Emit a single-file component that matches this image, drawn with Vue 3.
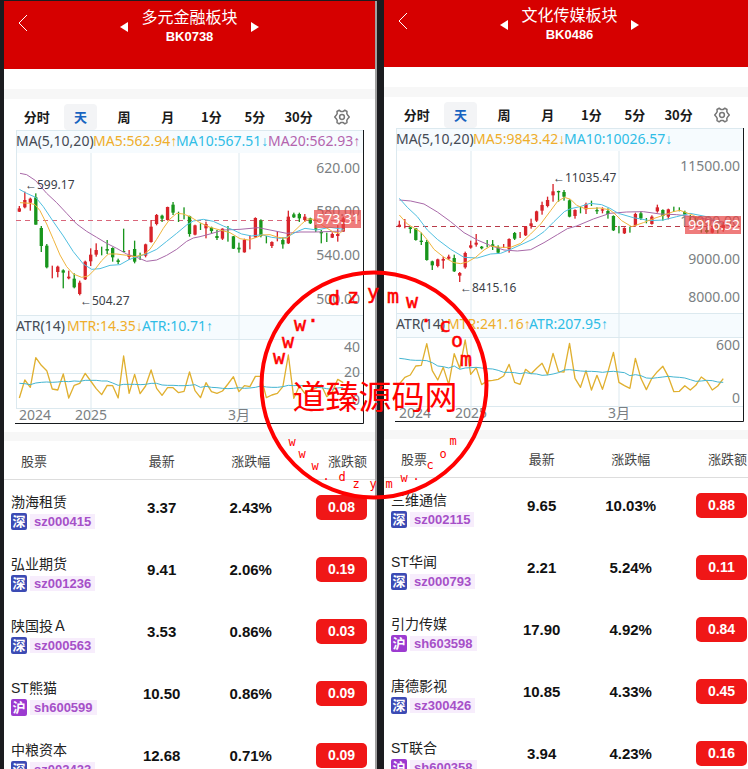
<template>
  <main class="board-page">
    <section v-for="board in boards" :key="board.code" class="phone">
      <header class="top-bar">
        <button class="back-btn" type="button" aria-label="返回">
          <svg width="10" height="18" viewBox="0 0 10 18"><path d="M9 1 1 9l8 8" /></svg>
        </button>
        <div class="board-switch">
          <button class="arrow-btn" type="button" aria-label="上一个板块">
            <svg width="8" height="10" viewBox="0 0 8 10"><path d="M8 0v10L0 5z" /></svg>
          </button>
          <div class="board-name">
            <h1>{{ board.name }}</h1>
            <p>{{ board.code }}</p>
          </div>
          <button class="arrow-btn" type="button" aria-label="下一个板块">
            <svg width="8" height="10" viewBox="0 0 8 10"><path d="M0 0v10l8-5z" /></svg>
          </button>
        </div>
      </header>

      <div class="spacer"></div>

      <section class="chart-card">
        <nav class="period-tabs">
          <button
            v-for="period in periods"
            :key="period"
            type="button"
            :class="['period-tab', { active: board.period === period }]"
            @click="board.period = period"
          >
            <span>{{ period }}</span>
          </button>
          <button class="period-tab" type="button" aria-label="设置">
            <svg class="gear" width="16" height="16" viewBox="0 0 16 16">
              <path d="M5.2 1.2 6.7 2.4H9.3L10.8 1.2 13 2.5 12.8 4.6 14 6.6 15.3 8 14 9.4 12.8 11.4 13 13.5 10.8 14.8 9.3 13.6H6.7L5.2 14.8 3 13.5 3.2 11.4 2 9.4.7 8 2 6.6 3.2 4.6 3 2.5z" />
              <circle cx="8" cy="8" r="2.4" />
            </svg>
          </button>
        </nav>

        <svg class="chart" viewBox="0 0 349 294" role="img" :aria-label="board.name">
          <rect class="band" x="1" y="0" width="347" height="23" />
          <rect class="band" x="1" y="185" width="347" height="24" />
          <path class="grid" d="M1.5 0V278M76 23V290M224 23V290M1 .5H348M1 185.5H348M1 209.5H348M1 278.5H348" />
          <path v-if="board.midGrid" class="grid" d="M1 243.5H348" />

          <text v-for="item in board.axis" :key="item.y" class="axis" x="345" :y="item.y" text-anchor="end">{{ item.text }}</text>
          <text class="axis" x="4" y="290">2024</text>
          <text class="axis" x="76" y="290" text-anchor="middle">2025</text>
          <text class="axis" x="224" y="290" text-anchor="middle">3月</text>

          <path class="dash" :class="board.dashClass" :d="`M1 ${board.dashY}H345`" />

          <!-- plot data is kept at three units per pixel -->
          <g :transform="`translate(${board.plotX} ${board.plotY}) scale(0.33333)`">
            <g v-for="(c, i) in board.candles" :key="i" :class="c[0] === 'r' ? 'up' : 'down'">
              <rect :x="candleX(board, i) - 2" :y="c[1]" width="4" :height="c[2] - c[1]" />
              <rect v-if="c.length > 3" :x="candleX(board, i) - 5" :y="c[3]" width="10" :height="c[4] - c[3]" />
            </g>
            <polyline class="line purple" :points="board.ma20" />
            <polyline class="line blue" :points="board.ma10" />
            <polyline class="line yellow" :points="board.ma5" />
            <g transform="translate(0 450)">
              <polyline class="line gold" :points="series(board, board.mtr)" />
              <polyline class="line teal" :points="series(board, board.atr)" />
            </g>
          </g>

          <rect class="price-tag" :x="346 - board.tagWidth" :y="board.tagY" :width="board.tagWidth" height="18" />
          <text class="price" x="345" :y="board.tagY + 14" text-anchor="end">{{ board.price }}</text>

          <text v-for="note in board.notes" :key="note.text" class="note" :x="note.x" :y="note.y"><tspan class="arrow">←</tspan>{{ note.text }}</text>
          <text v-for="item in board.legend" :key="item.text" :class="['legend', item.color]" :x="item.x" :y="item.y">{{ item.text }}<tspan class="arrow">{{ item.arrow }}</tspan></text>

          <path class="frame" d="M348.5 0V293.5H0" />
        </svg>
      </section>

      <table class="stock-table">
        <colgroup>
          <col class="col-name" />
          <col class="col-price" />
          <col class="col-rate" />
          <col class="col-change" />
        </colgroup>
        <thead>
          <tr>
            <th class="name-head">股票</th>
            <th>最新</th>
            <th>涨跌幅</th>
            <th class="change-head">涨跌额</th>
          </tr>
        </thead>
        <tbody>
          <tr v-for="stock in board.stocks" :key="stock.code">
            <td class="name-cell">
              <div class="stock-name">{{ stock.name }}</div>
              <div class="stock-code">
                <span :class="['market', stock.code.slice(0, 2)]">{{ stock.code.startsWith('sz') ? '深' : '沪' }}</span>
                <span class="code">{{ stock.code }}</span>
              </div>
            </td>
            <td class="number">{{ stock.price }}</td>
            <td class="number">{{ stock.rate }}</td>
            <td class="change-cell"><span class="change">{{ stock.change }}</span></td>
          </tr>
        </tbody>
      </table>
    </section>

    <svg class="stamp" width="230" height="230" viewBox="0 0 230 230">
      <circle cx="115" cy="115" r="112.5" />
      <text v-for="(l, i) in stampTop" :key="'t' + i" class="stamp-big" :x="l[1]" :y="l[2]">{{ l[0] }}</text>
      <text class="stamp-name" x="116" y="139">道臻源码网</text>
      <text v-for="(l, i) in stampBottom" :key="'b' + i" class="stamp-small" :x="l[1]" :y="l[2]">{{ l[0] }}</text>
    </svg>
  </main>
</template>

<script setup>
import { reactive } from 'vue';

const periods = ['分时', '天', '周', '月', '1分', '5分', '30分'];

const candleX = (board, i) => board.startX + i * 16.47;

const series = (board, values) =>
  values.map((v, i) => `${candleX(board, i).toFixed(1)},${v}`).join(' ');

// candle: [r = up / g = down, high, low, body top, body bottom]
const boards = reactive([
  {
    name: '多元金融板块',
    code: 'BK0738',
    period: '天',
    plotX: -15,
    plotY: 20,
    startX: 58,
    midGrid: true,
    dashY: 90.5,
    dashClass: 'soft',
    price: '573.31',
    tagWidth: 47,
    tagY: 80,
    axis: [
      { text: '620.00', y: 43 },
      { text: '580.00', y: 86 },
      { text: '540.00', y: 130 },
      { text: '500.00', y: 174 },
      { text: '40', y: 222 },
      { text: '20', y: 247 },
      { text: '0', y: 275 },
    ],
    notes: [
      { text: '599.17', x: 10, y: 59 },
      { text: '504.27', x: 65, y: 175 },
    ],
    legend: [
      { text: 'MA(5,10,20)', x: 1, y: 16, color: 'c-dark', arrow: '' },
      { text: 'MA5:562.94', x: 78, y: 16, color: 'c-yellow', arrow: '↑' },
      { text: 'MA10:567.51', x: 161, y: 16, color: 'c-blue', arrow: '↓' },
      { text: 'MA20:562.93', x: 253, y: 16, color: 'c-purple', arrow: '↑' },
      { text: 'ATR(14)', x: 1, y: 201, color: 'c-dark', arrow: '' },
      { text: 'MTR:14.35', x: 52, y: 201, color: 'c-yellow', arrow: '↓' },
      { text: 'ATR:10.71', x: 127, y: 201, color: 'c-blue', arrow: '↑' },
    ],
    candles: [
      ['r', 168, 186, 175, 185], ['r', 125, 175, 150, 172], ['r', 143, 182, 146, 158],
      ['g', 130, 224, 142, 224], ['g', 228, 306, 234, 288], ['g', 282, 355, 287, 352],
      ['r', 347, 385], ['r', 347, 382, 350, 366], ['g', 358, 415, 361, 368],
      ['r', 362, 388, 380, 385], ['g', 370, 415, 386, 412], ['r', 392, 436, 398, 432],
      ['r', 332, 390, 335, 388], ['r', 295, 348, 314, 334], ['r', 280, 320, 300, 314],
      ['g', 290, 316], ['g', 270, 312, 297, 302], ['g', 292, 335, 294, 322],
      ['g', 326, 342, 331, 336], ['g', 236, 306, 303, 306], ['r', 300, 330, 315, 321],
      ['g', 272, 340, 297, 335], ['g', 308, 330], ['r', 281, 322, 283, 317],
      ['r', 210, 278, 230, 276], ['r', 192, 226, 195, 222], ['g', 194, 216, 197, 206],
      ['r', 170, 212, 171, 210], ['g', 156, 195, 164, 188], ['g', 185, 216],
      ['g', 172, 208], ['g', 197, 260, 198, 252], ['r', 224, 256, 226, 254],
      ['g', 220, 240], ['r', 215, 265, 222, 235], ['g', 230, 250, 233, 243],
      ['g', 240, 270, 258, 264], ['r', 235, 270, 236, 266], ['g', 228, 275],
      ['g', 258, 297, 259, 296], ['g', 278, 308, 293, 298], ['r', 266, 308, 270, 307],
      ['r', 256, 298], ['r', 202, 264, 204, 262], ['g', 208, 262, 212, 258],
      ['g', 258, 280], ['r', 274, 294, 276, 288], ['r', 244, 274],
      ['g', 262, 296, 270, 283], ['r', 182, 282, 200, 280], ['g', 188, 204, 193, 202],
      ['g', 188, 216, 192, 205], ['r', 192, 216, 200, 210], ['g', 203, 222, 205, 220],
      ['g', 225, 246, 235, 239], ['g', 240, 280, 246, 250], ['g', 248, 276],
      ['r', 247, 264, 252, 263], ['r', 225, 275, 252, 258], ['r', 200, 246, 205, 245],
    ],
    ma5: '60,158 90,160 105,164 120,182 140,222 160,268 180,315 200,350 220,372 245,382 265,378 285,358 305,332 325,312 350,312 380,316 405,320 430,314 450,298 470,268 490,235 510,207 530,190 550,192 570,200 600,218 630,232 660,240 690,248 720,266 745,270 770,262 785,255 810,254 835,262 860,265 880,246 905,222 922,207 945,208 970,228 1000,246 1020,250 1032,238',
    ma10: '58,118 80,130 107,142 130,170 160,215 190,258 220,305 250,342 275,358 300,356 330,346 360,344 385,330 405,322 440,312 470,298 500,274 530,250 560,225 580,213 610,208 640,214 670,228 700,240 725,252 755,258 785,254 815,262 840,265 860,262 890,245 915,235 950,240 990,232 1032,238',
    ma20: '60,70 80,74 107,92 140,130 170,158 200,190 230,222 260,244 290,262 320,280 350,295 380,312 410,322 440,334 470,330 500,316 530,298 560,274 580,264 600,260 630,252 670,240 720,238 775,233 810,240 860,250 900,246 950,246 1032,243',
    mtr: [294, 240, 262, 173, 196, 212, 267, 270, 222, 294, 256, 250, 220, 243, 266, 284, 256, 257, 294, 168, 280, 223, 281, 258, 210, 265, 286, 263, 263, 278, 274, 216, 272, 293, 248, 275, 280, 273, 252, 230, 275, 257, 260, 229, 229, 293, 285, 280, 260, 165, 295, 258, 280, 270, 265, 255, 290, 275, 238, 248],
    atr: [250, 251, 254, 249, 247, 246, 247, 246, 244, 245, 243, 244, 241, 241, 241, 243, 243, 249, 256, 253, 253, 253, 254, 253, 250, 250, 255, 256, 256, 257, 257, 256, 254, 262, 259, 262, 263, 265, 266, 265, 263, 265, 264, 262, 258, 261, 262, 262, 260, 256, 257, 256, 258, 260, 262, 263, 266, 268, 264, 262],
    stocks: [
      { name: '渤海租赁', code: 'sz000415', price: '3.37', rate: '2.43%', change: '0.08' },
      { name: '弘业期货', code: 'sz001236', price: '9.41', rate: '2.06%', change: '0.19' },
      { name: '陕国投Ａ', code: 'sz000563', price: '3.53', rate: '0.86%', change: '0.03' },
      { name: 'ST熊猫', code: 'sh600599', price: '10.50', rate: '0.86%', change: '0.09' },
      { name: '中粮资本', code: 'sz002423', price: '12.68', rate: '0.71%', change: '0.09' },
    ],
  },
  {
    name: '文化传媒板块',
    code: 'BK0486',
    period: '天',
    plotX: -11,
    plotY: 22,
    startX: 46,
    midGrid: false,
    dashY: 98.5,
    dashClass: 'strong',
    price: '9916.52',
    tagWidth: 56,
    tagY: 88,
    axis: [
      { text: '11500.00', y: 43 },
      { text: '10000.00', y: 98 },
      { text: '9000.00', y: 136 },
      { text: '8000.00', y: 174 },
      { text: '600', y: 222 },
      { text: '0', y: 275 },
    ],
    notes: [
      { text: '11035.47', x: 158, y: 54 },
      { text: '8415.16', x: 65, y: 164 },
    ],
    legend: [
      { text: 'MA(5,10,20)', x: 1, y: 16, color: 'c-dark', arrow: '' },
      { text: 'MA5:9843.42', x: 78, y: 16, color: 'c-yellow', arrow: '↓' },
      { text: 'MA10:10026.57', x: 169, y: 16, color: 'c-blue', arrow: '↓' },
      { text: 'ATR(14)', x: 1, y: 201, color: 'c-dark', arrow: '' },
      { text: 'MTR:241.16', x: 52, y: 201, color: 'c-yellow', arrow: '↑' },
      { text: 'ATR:207.95', x: 134, y: 201, color: 'c-blue', arrow: '↑' },
    ],
    candles: [
      ['r', 212, 232, 224, 230], ['r', 207, 235], ['g', 230, 250, 232, 237],
      ['g', 234, 272, 235, 270], ['g', 248, 285, 272, 276], ['g', 270, 332, 276, 330],
      ['g', 332, 360, 334, 346], ['r', 326, 352, 328, 348], ['r', 320, 356, 327, 332],
      ['r', 314, 330, 320, 326], ['g', 314, 366, 324, 364], ['r', 366, 396, 369, 377],
      ['r', 305, 356, 309, 352], ['r', 272, 296, 286, 293], ['r', 252, 290, 278, 284],
      ['g', 288, 298, 290, 295], ['g', 270, 292], ['g', 270, 300, 283, 290],
      ['g', 286, 312, 292, 308], ['r', 282, 294], ['r', 265, 308, 267, 298],
      ['g', 246, 270, 249, 266], ['r', 246, 264], ['r', 228, 258, 230, 256],
      ['r', 206, 236, 220, 228], ['r', 182, 216, 184, 212], ['r', 155, 194, 165, 182],
      ['r', 140, 172, 150, 168], ['r', 102, 155, 124, 136], ['g', 122, 155, 123, 127],
      ['g', 120, 152, 126, 140], ['g', 148, 202, 151, 200], ['r', 178, 206, 180, 198],
      ['g', 170, 190], ['r', 158, 192, 163, 178], ['g', 152, 168],
      ['g', 172, 192, 180, 184], ['r', 172, 190, 178, 182], ['g', 175, 206, 183, 192],
      ['g', 196, 243, 198, 241], ['g', 228, 250], ['r', 232, 252, 234, 250],
      ['g', 230, 248], ['r', 188, 230, 192, 226], ['g', 184, 210, 190, 205],
      ['g', 204, 220], ['r', 196, 224, 200, 222], ['r', 164, 188, 172, 184],
      ['g', 178, 212, 180, 198], ['r', 176, 208, 178, 200], ['g', 170, 186],
      ['g', 172, 184], ['g', 182, 196, 186, 194], ['g', 195, 215],
      ['g', 200, 220], ['g', 220, 248], ['g', 232, 250, 240, 246],
      ['r', 230, 250, 235, 248], ['g', 225, 250], ['r', 215, 245, 225, 240],
    ],
    ma5: '46,195 70,222 110,246 130,270 150,298 180,322 210,338 230,341 250,336 275,322 300,300 320,288 350,292 380,292 410,280 440,252 470,222 500,182 520,155 541,142 560,148 578,166 603,176 648,174 678,180 693,192 713,212 743,230 778,218 808,206 838,196 868,185 888,181 928,196 968,220 1018,240',
    ma10: '46,145 70,172 100,200 130,240 160,268 200,298 240,322 280,324 320,312 350,310 380,298 420,280 450,266 480,245 510,215 541,185 560,176 588,170 618,160 653,164 678,175 703,190 748,203 798,212 838,210 878,200 918,190 968,200 1018,222',
    ma20: '46,150 80,153 120,162 160,186 200,215 240,248 280,270 320,287 360,300 400,303 440,299 480,278 520,254 550,236 578,228 628,207 678,190 728,186 778,185 828,192 878,194 928,200 978,210 1018,216',
    mtr: [252, 232, 225, 198, 196, 131, 212, 240, 202, 254, 161, 205, 120, 223, 203, 254, 243, 241, 238, 228, 193, 247, 253, 208, 221, 205, 190, 224, 160, 215, 216, 130, 235, 262, 212, 270, 226, 268, 215, 157, 247, 257, 265, 175, 235, 269, 235, 215, 199, 230, 275, 274, 257, 270, 256, 231, 243, 270, 258, 236],
    atr: [175, 177, 180, 181, 181, 182, 188, 198, 200, 204, 198, 208, 204, 203, 202, 204, 206, 207, 211, 217, 217, 218, 221, 218, 221, 222, 226, 225, 222, 218, 210, 209, 211, 213, 214, 214, 215, 217, 215, 214, 216, 218, 227, 224, 227, 234, 235, 233, 231, 229, 231, 232, 234, 239, 244, 243, 241, 242, 246, 247],
    stocks: [
      { name: '三维通信', code: 'sz002115', price: '9.65', rate: '10.03%', change: '0.88' },
      { name: 'ST华闻', code: 'sz000793', price: '2.21', rate: '5.24%', change: '0.11' },
      { name: '引力传媒', code: 'sh603598', price: '17.90', rate: '4.92%', change: '0.84' },
      { name: '唐德影视', code: 'sz300426', price: '10.85', rate: '4.33%', change: '0.45' },
      { name: 'ST联合', code: 'sh600358', price: '3.94', rate: '4.23%', change: '0.16' },
    ],
  },
]);

// letters around the round stamp: [char, x, baseline]
const stampTop = [
  ['w', 20, 94], ['w', 29, 78], ['w', 41, 61], ['.', 54, 52], ['d', 75, 35],
  ['z', 94, 33], ['y', 114, 29], ['m', 134, 33], ['w', 153, 38], ['.', 167, 52],
  ['c', 186, 62], ['o', 198, 77], ['m', 207, 96],
];
const stampBottom = [
  ['w', 33, 176], ['w', 43, 188], ['w', 56, 200], ['.', 67, 210], ['d', 83, 211],
  ['z', 97, 218], ['y', 114, 218], ['m', 130, 218], ['w', 145, 212], ['.', 157, 210],
  ['c', 171, 199], ['o', 184, 188], ['m', 194, 175],
];
</script>

<style>
body {
  background-color: #1b1c1f;
}
</style>

<style scoped>
.board-page {
  position: relative;
  display: flex;
  gap: 7px;
  height: 100vh;
  padding: 1px 0 0 4px;
  box-sizing: border-box;
  overflow: hidden;
  background-color: #1b1c1f;
  font-family: 'Liberation Sans', 'Noto Sans CJK SC', sans-serif;
}

.phone {
  flex: 0 0 calc(50% - 1px);
  background-color: #ffffff;
}

.phone:first-child {
  box-sizing: content-box;
  border-right: 2px solid #a0a0a0;
}

/* second screen is scrolled slightly further */
.phone + .phone {
  margin-top: -2px;
}

button {
  border: none;
  background: none;
  padding: 0;
  cursor: pointer;
}

.top-bar {
  position: relative;
  height: 68px;
  background-color: #d60000;
  color: #ffffff;
}

.back-btn {
  position: absolute;
  left: 14px;
  top: 13px;
}

.back-btn svg {
  display: block;
  fill: none;
  stroke: #ffffff;
}

.board-switch {
  display: flex;
  justify-content: center;
  align-items: center;
  gap: 13px;
  padding-top: 7px;
}

.arrow-btn svg {
  display: block;
  fill: #ffffff;
}

.board-name {
  text-align: center;
}

.board-name h1 {
  margin: 0;
  font-size: 16px;
  line-height: 20px;
  font-weight: 400;
}

.board-name p {
  margin: 0;
  font-size: 13px;
  line-height: 18px;
  font-weight: 700;
}

.spacer {
  height: 20px;
}

.chart-card {
  border-top: 10px solid #f7f7f7;
  border-bottom: 9px solid #f7f7f7;
  padding: 5px 11px 8px;
}

.period-tabs {
  display: flex;
}

.period-tab {
  flex: 1;
  display: flex;
  justify-content: center;
  align-items: center;
  height: 26px;
  font-family: 'Noto Sans CJK SC', sans-serif;
  font-size: 13px;
  font-weight: 700;
  color: #1a1a1a;
}

.period-tab span {
  min-width: 33px;
  line-height: 26px;
  border-radius: 4px;
}

.period-tab.active span {
  background-color: #f3f4f6;
  color: #1763c0;
}

.gear {
  fill: none;
  stroke: #777777;
  stroke-width: 1.5;
  stroke-linejoin: round;
}

.chart {
  display: block;
  width: 100%;
  font-family: 'Noto Sans', 'Noto Sans CJK SC', sans-serif;
  font-size: 14px;
}

.band {
  fill: #f6fbfe;
}

.grid {
  fill: none;
  stroke: #dce9ef;
}

.frame {
  fill: none;
  stroke: #16191c;
}

.axis {
  fill: #7b7f83;
}

.dash {
  fill: none;
  stroke-dasharray: 5 4;
}

.dash.soft {
  stroke: #d9667a;
}

.dash.strong {
  stroke: #b83a48;
}

.up {
  fill: #d8232a;
}

.down {
  fill: #18951c;
}

.line {
  fill: none;
  stroke-width: 3;
  stroke-linejoin: round;
}

.purple {
  stroke: #a868a8;
}

.blue {
  stroke: #4fbfe0;
}

.yellow {
  stroke: #efb43c;
}

.gold {
  stroke: #e0b030;
  stroke-width: 4;
}

.teal {
  stroke: #42b4d0;
}

.price-tag {
  fill: #e84545;
  fill-opacity: 0.7;
}

.price {
  fill: #ffffff;
}

.note {
  font-size: 12px;
  fill: #3a4048;
}

.arrow {
  font-family: 'Liberation Sans', sans-serif;
}

.c-dark {
  fill: #444a54;
}

.c-yellow {
  fill: #efae2c;
}

.c-blue {
  fill: #2fbde6;
}

.c-purple {
  fill: #b464ae;
}

.stock-table {
  width: 100%;
  table-layout: fixed;
  border-collapse: collapse;
}

.col-name {
  width: 31%;
}

.col-price {
  width: 23%;
}

.col-rate {
  width: 25%;
}

.col-change {
  width: 21%;
}

.stock-table th {
  height: 38px;
  padding: 0;
  border-bottom: 1px solid #dddddd;
  font-family: 'Noto Sans CJK SC', sans-serif;
  font-size: 13px;
  font-weight: 400;
  color: #444444;
}

.stock-table .name-head {
  padding-left: 17px;
  text-align: left;
}

.stock-table .change-head {
  padding-right: 8px;
  text-align: right;
}

.stock-table td {
  height: 62px;
  padding: 0;
  box-sizing: border-box;
  vertical-align: top;
}

.stock-table .name-cell {
  padding: 12px 0 0 7px;
}

.stock-name {
  font-size: 14px;
  line-height: 20px;
  color: #222222;
}

.stock-code {
  display: flex;
  align-items: center;
  gap: 3px;
  margin-top: 1px;
}

.market {
  width: 16px;
  border-radius: 2px;
  font-size: 13px;
  line-height: 17px;
  font-weight: 700;
  text-align: center;
  color: #ffffff;
}

.market.sz {
  background-color: #3c4bb4;
}

.market.sh {
  background-color: #9c3bd0;
}

.code {
  padding: 0 4px;
  background-color: #f7edfc;
  font-size: 13px;
  line-height: 15px;
  font-weight: 700;
  color: #a650c8;
}

.stock-table .number {
  padding-top: 18px;
  font-size: 15px;
  line-height: 20px;
  font-weight: 700;
  text-align: center;
  color: #111111;
}

.stock-table .change-cell {
  padding: 15px 8px 0 0;
}

.change {
  display: block;
  width: 51px;
  margin-left: auto;
  border-radius: 5px;
  background-color: #f01717;
  font-size: 14px;
  line-height: 25px;
  font-weight: 700;
  text-align: center;
  color: #ffffff;
}

.stamp {
  position: absolute;
  left: 50%;
  top: 50%;
  transform: translate(-50%, -50%);
  pointer-events: none;
  fill: #ff0000;
  text-anchor: middle;
}

.stamp circle {
  fill: none;
  stroke: #ff0000;
  stroke-width: 4;
}

.stamp-big {
  font-family: 'DejaVu Sans Mono', monospace;
  font-size: 20px;
  stroke: #ff0000;
  stroke-width: 0.5;
}

.stamp-small {
  font-family: 'DejaVu Sans Mono', monospace;
  font-size: 12px;
}

.stamp-name {
  font-family: 'Noto Sans CJK SC', sans-serif;
  font-size: 33px;
}
</style>
